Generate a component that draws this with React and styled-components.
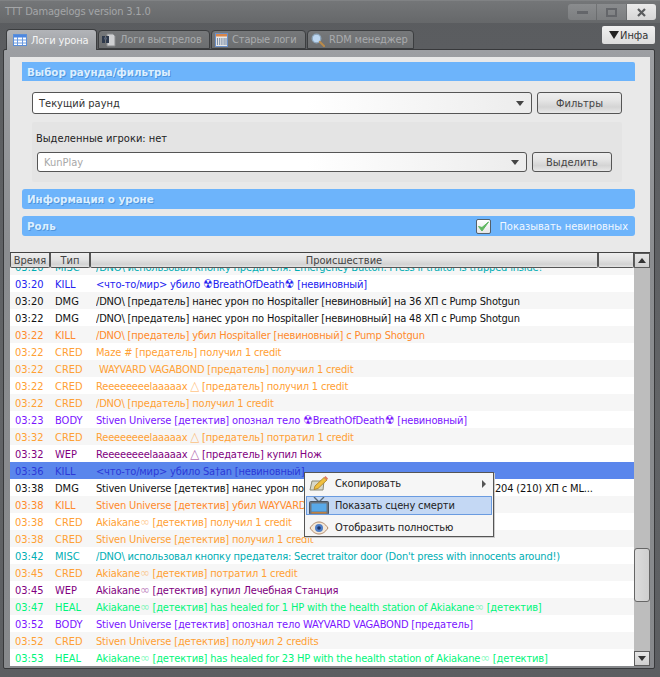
import React from 'react';
import styled, { createGlobalStyle } from 'styled-components';

const Global = createGlobalStyle`
  html, body { margin: 0; padding: 0; background: #5f6164; }
  body { font-family: "DejaVu Sans Condensed", "DejaVu Sans", sans-serif; font-stretch: condensed; font-size: 11px; }
  * { box-sizing: border-box; }
`;

const Window = styled.div`
  position: relative; width: 660px; height: 677px; overflow: hidden;
  display: flex; flex-direction: column;
  background: linear-gradient(#5a5c5f, #626467 60%, #5c5e61);
`;
const TitleBar = styled.div`
  height: 23px; flex: none; display: flex; align-items: flex-start; justify-content: space-between;
  padding: 3px 4px 0 5px;
  background: linear-gradient(#747678, #66686a);
  border-top: 1px solid #808284;
`;
const Title = styled.span`color: #a4a6a8; line-height: 15px; letter-spacing: -.18px;`;
const Controls = styled.div`display: flex; gap: 1px; margin-top: 0;`;
const WinBtn = styled.div`
  width: ${p => p.$w}px; height: 16px; display: flex; align-items: center; justify-content: center;
  background: ${p => p.$light ? 'linear-gradient(#eaeaea,#d6d6d6)' : 'linear-gradient(#8a8c8e,#7c7e80)'};
  border-radius: ${p => p.$r};
`;
const TabStrip = styled.div`
  height: 26px; flex: none; display: flex; align-items: flex-end; justify-content: space-between;
  padding: 0 5px 0 6px; position: relative; z-index: 2;
`;
const Tabs = styled.div`display: flex; align-items: flex-end; gap: 1px;`;
const Tab = styled.div`
  width: ${p => p.$w}px; display: flex; align-items: center; gap: 4px; white-space: nowrap; letter-spacing: -.15px;
  height: ${p => p.$active ? 21 : 19}px; margin-bottom: ${p => p.$active ? -1 : 0}px;
  padding: 0 0 0 ${p => p.$pad}px; border: 1px solid #3c3e40; border-bottom: ${p => p.$active ? 'none' : '1px solid #3c3e40'};
  border-radius: 4px 4px 0 0;
  color: ${p => p.$active ? '#f4f4f4' : '#a9abad'};
  background: ${p => p.$active ? 'linear-gradient(#b2b4b8,#9b9ea2)' : 'linear-gradient(#76787a,#6c6e70)'};
`;
const InfoBtn = styled.div`
  width: 53px; height: 18px; margin-bottom: 5px; display: flex; align-items: center; gap: 1px; padding-left: 7px;
  background: linear-gradient(#f0f0f0,#dcdcdc); border-radius: 2px; color: #333;
`;
const InfoArrow = styled.i`
  width: 0; height: 0; border-left: 5px solid transparent; border-right: 5px solid transparent; border-top: 8px solid #222;
`;
const Panel = styled.div`
  margin: 0 5px 8px 3px; flex: 1; min-height: 0; border: 1px solid #38393b; border-radius: 2px;
  padding: 7px 4px 2px 6px; display: flex; flex-direction: column;
  background: linear-gradient(#9d9fa3, #8b8d90 200px, #87898c);
`;
const Filters = styled.div`
  height: 195px; flex: none; background: #e9e9e9; padding: 5px 15px 0 12px; display: flex; flex-direction: column;
`;
const Bar = styled.div`
  flex: none; height: ${p => p.$h}px; margin-top: ${p => p.$mt || 0}px; background: #6db4fb; border-radius: ${p => p.$flat ? '0 2px 0 0' : '3px'};
  display: flex; align-items: center; justify-content: space-between; padding: 0 7px 0 5px;
`;
const BarTitle = styled.span`
  color: #dcefff; font-family: "DejaVu Sans", sans-serif; font-stretch: normal; font-weight: 700; font-size: 10.3px; text-shadow: 1px 1px 0 #4f95dc;
`;
const Check = styled.label`display: flex; align-items: center; gap: 8px; color: #f2f8ff;`;
const CheckBox = styled.span`
  width: 15px; height: 15px; border: 1px solid #55606a; border-radius: 2px; background: linear-gradient(#fff,#e6e6e6);
  display: flex; align-items: center; justify-content: center;
`;
const Line = styled.div`display: flex; gap: 5px; padding: ${p => p.$pad}; flex: none;`;
const Combo = styled.div`
  flex: 1; height: ${p => p.$h}px; border: 1px solid #555; border-radius: 3px; display: flex; align-items: center; justify-content: space-between;
  padding: 0 7px 0 6px; background: linear-gradient(90deg, #fff 55%, #ececec); color: ${p => p.$muted ? '#a8a8a8' : '#333'};
`;
const ComboArrow = styled.i`
  width: 0; height: 0; border-left: 4px solid transparent; border-right: 4px solid transparent; border-top: 5px solid #444;
`;
const Button = styled.div`
  width: ${p => p.$w}px; height: ${p => p.$h}px; flex: none; border: 1px solid #555; border-radius: 3px; display: flex; align-items: center; justify-content: center;
  color: #444; background: linear-gradient(#eeeeee, #e6e6e6 35%, #d4d4d4 70%, #e8e8e8);
`;
const PlayersBox = styled.div`
  margin: 8px 0 0 10px; width: 590px; height: 60px; flex: none; background: #e4e4e4; border-radius: 2px; padding: 9px 10px 0 4px;
  display: flex; flex-direction: column;
`;
const PlayersLabel = styled.div`color: #222; line-height: 16px; height: 21px;`;
const List = styled.div`
  height: 414px; flex: none; display: flex; flex-direction: column; background: #fff; position: relative;
`;
const Header = styled.div`display: flex; height: 16px; flex: none; border-top: 1px solid #444; position: relative; z-index: 1;`;
const HeadCell = styled.div`
  width: ${p => p.$w}px; border: 1px solid #555; border-top: none; border-radius: 0 0 2px 2px; color: #444;
  display: flex; align-items: center; justify-content: center; line-height: 13px;
  background: linear-gradient(#eeeeee, #e2e2e2 50%, #d2d2d2 80%, #e4e4e4);
`;
const ScrollBtn = styled.div`
  width: 16px; height: 15px; flex: none; background: linear-gradient(#e6e6e6,#cfcfcf); border: 1px solid #5c5c5c; display: flex; align-items: center; justify-content: center;
`;
const ArrowUp = styled.i`
  width: 0; height: 0; border-left: 4px solid transparent; border-right: 4px solid transparent; border-bottom: 5px solid #333;
`;
const ArrowDown = styled.i`
  width: 0; height: 0; border-left: 4px solid transparent; border-right: 4px solid transparent; border-top: 5px solid #333;
`;
const Body = styled.div`flex: 1; min-height: 0; display: flex;`;
const Rows = styled.div`flex: 1; min-width: 0; overflow: hidden;`;
const RowsInner = styled.div`margin-top: -10px;`;
const Row = styled.div`
  height: 17px; display: flex; align-items: center; white-space: nowrap; line-height: 17px; padding-top: 1px;
  color: ${p => p.$c};
  background: ${p => p.$sel ? '#5a86ec' : p.$odd ? '#f6f6f6' : '#ffffff'};
`;
const Time = styled.span`width: 45px; padding-left: 5px; flex: none;`;
const Kind = styled.span`width: 41px; flex: none;`;
const Msg = styled.span`flex: 1; min-width: 0; overflow: hidden; letter-spacing: -.17px;`;
const Rad = styled.span`font-size: 12px; letter-spacing: 0;`;
const Tri = styled.span`font-size: 13px; line-height: 1; opacity: .6;`;
const Inf = styled.span`font-size: 13px; line-height: 1; opacity: .45;`;
const Track = styled.div`
  width: 16px; flex: none; background: #bdbdbd; display: flex; flex-direction: column; padding-top: 280px;
`;
const Thumb = styled.div`
  height: 54px; flex: none; background: linear-gradient(90deg,#dcdcdc,#cfcfcf); border: 1px solid #666; border-radius: 3px;
`;
const TrackFill = styled.div`flex: 1;`;
const Menu = styled.div`
  position: absolute; left: 304px; top: 472px; width: 190px; height: 65px; background: #f6f6f6; border: 1px solid #555;
  box-shadow: 1px 1px 0 #ccc; padding: 1px 1px; z-index: 5; display: flex; flex-direction: column; gap: 3px;
`;
const MenuItem = styled.div`
  height: 19px; flex: none; padding-left: 3px; display: flex; align-items: center; gap: 6px; color: #222; position: relative; letter-spacing: -.15px;
  background: ${p => p.$hot ? '#c4d8f4' : 'transparent'};
  outline: ${p => p.$hot ? '1px solid #6a9be0' : 'none'}; outline-offset: -1px;
`;
const MenuLabel = styled.span`flex: 1;`;
const SubArrow = styled.i`
  margin-right: 6px; width: 0; height: 0; border-top: 4px solid transparent; border-bottom: 4px solid transparent; border-left: 4px solid #555;
`;

const C = { misc: '#00aeb4', kill: '#2222f0', dmg: '#111', ok: '#ff8a2b', cred: '#ffa033', body: '#7a14ff', wep: '#7f007f', heal: '#00f57a', sel: '#2b39d8' };
const R = () => <Rad>☢</Rad>;
const Reee = () => <>Reeeeeeeelaaaaax <Tri>△</Tri></>;
const Aki = () => <>Akiakane<Inf>∞</Inf></>;

const rows = [
  ['03:20', 'MISC', C.misc, <>/DNO\ использовал кнопку предателя: Emergency Button. Press if traitor is trapped inside!</>],
  ['03:20', 'KILL', C.kill, <>{'<что-то/мир>'} убило <R />BreathOfDeath<R /> [невиновный]</>],
  ['03:20', 'DMG', C.dmg, <>/DNO\ [предатель] нанес урон по Hospitaller [невиновный] на 36 ХП с Pump Shotgun</>],
  ['03:22', 'DMG', C.dmg, <>/DNO\ [предатель] нанес урон по Hospitaller [невиновный] на 48 ХП с Pump Shotgun</>],
  ['03:22', 'KILL', C.ok, <>/DNO\ [предатель] убил Hospitaller [невиновный] с Pump Shotgun</>],
  ['03:22', 'CRED', C.cred, <>Maze # [предатель] получил 1 credit</>],
  ['03:22', 'CRED', C.cred, <>&nbsp;WAYVARD VAGABOND [предатель] получил 1 credit</>],
  ['03:22', 'CRED', C.cred, <><Reee /> [предатель] получил 1 credit</>],
  ['03:22', 'CRED', C.cred, <>/DNO\ [предатель] получил 1 credit</>],
  ['03:23', 'BODY', C.body, <>Stiven Universe [детектив] опознал тело <R />BreathOfDeath<R /> [невиновный]</>],
  ['03:32', 'CRED', C.cred, <><Reee /> [предатель] потратил 1 credit</>],
  ['03:32', 'WEP', C.wep, <><Reee /> [предатель] купил Нож</>],
  ['03:36', 'KILL', C.sel, <>{'<что-то/мир>'} убило Sa†an [невиновный]</>, true],
  ['03:38', 'DMG', C.dmg, <>Stiven Universe [детектив] нанес урон по WAYVARD VAGABOND [предатель] на 204 (210) ХП с ML...</>],
  ['03:38', 'KILL', C.ok, <>Stiven Universe [детектив] убил WAYVARD VAGABOND [предатель] с ML</>],
  ['03:38', 'CRED', C.cred, <><Aki /> [детектив] получил 1 credit</>],
  ['03:38', 'CRED', C.cred, <>Stiven Universe [детектив] получил 1 credit</>],
  ['03:42', 'MISC', C.misc, <>/DNO\ использовал кнопку предателя: Secret traitor door (Don't press with innocents around!)</>],
  ['03:45', 'CRED', C.cred, <><Aki /> [детектив] потратил 1 credit</>],
  ['03:45', 'WEP', C.wep, <><Aki /> [детектив] купил Лечебная Станция</>],
  ['03:47', 'HEAL', C.heal, <><Aki /> [детектив] has healed for 1 HP with the health station of <Aki /> [детектив]</>],
  ['03:52', 'BODY', C.body, <>Stiven Universe [детектив] опознал тело WAYVARD VAGABOND [предатель]</>],
  ['03:52', 'CRED', C.cred, <>Stiven Universe [детектив] получил 2 credits</>],
  ['03:53', 'HEAL', C.heal, <><Aki /> [детектив] has healed for 23 HP with the health station of <Aki /> [детектив]</>],
];

const TableIcon = () => (
  <svg width="14" height="12" viewBox="0 0 14 12">
    <rect x=".5" y=".5" width="13" height="11" fill="#fff" stroke="#5b8fd8" />
    <rect x="1" y="1" width="12" height="2.500" fill="#4c86e0" />
    <path d="M1 6h12M1 9h12M4.500 3v8M9.500 3v8" stroke="#6a9ae0" />
  </svg>
);
const BinocIcon = () => (
  <svg width="14" height="14" viewBox="0 0 14 14">
    <path d="M5 1h6l2 2v10H5z" fill="#cfd0d2" stroke="#8a8c8e" />
    <rect x="0" y="3" width="3" height="7" fill="#2f3a4c" />
    <rect x="4" y="3" width="3" height="7" fill="#2f3a4c" />
    <rect x="2" y="4.500" width="3" height="2" fill="#566074" />
  </svg>
);
const ColsIcon = () => (
  <svg width="13" height="14" viewBox="0 0 13 14">
    <rect x=".5" y=".5" width="12" height="13" fill="#e8e8e8" stroke="#6a8fc8" />
    <rect x="1" y="1" width="11" height="2.500" fill="#d8854a" />
    <path d="M2.500 5v7M4.700 5v7M6.900 5v7M9.100 5v7M11 5v7" stroke="#7f90a8" strokeWidth="1.100" />
  </svg>
);
const LensIcon = () => (
  <svg width="14" height="14" viewBox="0 0 14 14">
    <circle cx="5.500" cy="5.500" r="4.300" fill="#bcd6f0" stroke="#8ea6bc" strokeWidth="1.300" />
    <path d="M9 9l4 4" stroke="#b98a4a" strokeWidth="2.100" strokeLinecap="round" />
  </svg>
);
const CheckMark = () => (
  <svg width="13" height="13" viewBox="0 0 13 13">
    <path d="M1.500 6.500l3.500 4.500 6.500-9-6.500 5.500z" fill="#5fb760" stroke="#5fb760" strokeWidth="1" strokeLinejoin="round" />
  </svg>
);
const PencilIcon = () => (
  <svg width="20" height="17" viewBox="0 0 20 17">
    <path d="M3 6h12l-1 9H1z" fill="#d8d8c8" stroke="#8a8a78" />
    <path d="M6 11L15 2.500l3 2.500-9 8.500-4 1z" fill="#f0c040" stroke="#a87c20" strokeWidth=".8" />
    <path d="M15 2.500l3 2.500 1-1.500-2.500-2.500z" fill="#e07860" />
  </svg>
);
const TvIcon = () => (
  <svg width="20" height="19" viewBox="0 0 20 19">
    <path d="M5 1l5 5 5-5" fill="none" stroke="#5a6a78" strokeWidth="1.400" />
    <rect x=".5" y="5.500" width="19" height="13" rx="1" fill="#6a7480" stroke="#4a5460" />
    <rect x="2.500" y="7.500" width="15" height="8" fill="#58a8e8" />
    <rect x="2.500" y="16" width="15" height="1.500" fill="#c08040" />
  </svg>
);
const EyeIcon = () => (
  <svg width="20" height="14" viewBox="0 0 20 14">
    <path d="M1 7c3-4.500 6-6 9-6s6 1.500 9 6c-3 4.500-6 6-9 6S4 11.500 1 7z" fill="#f4e8d8" stroke="#b08868" />
    <circle cx="10" cy="7" r="4" fill="#4f7fc8" />
    <circle cx="10" cy="7" r="1.800" fill="#1c3468" />
  </svg>
);

export default function App() {
  return (
    <Window>
      <Global />
      <TitleBar>
        <Title>TTT Damagelogs version 3.1.0</Title>
        <Controls>
          <WinBtn $w={28} $r="3px 0 0 3px">
            <svg width="11" height="4" viewBox="0 0 11 4"><rect width="11" height="3" y="1" fill="#64666a" /></svg>
          </WinBtn>
          <WinBtn $w={29} $r="0">
            <svg width="11" height="9" viewBox="0 0 11 9"><rect x="1" y="1" width="9" height="7" fill="none" stroke="#64666a" strokeWidth="2" /></svg>
          </WinBtn>
          <WinBtn $w={29} $r="0 3px 3px 0" $light>
            <svg width="9" height="9" viewBox="0 0 9 9"><path d="M1 1l7 7M8 1L1 8" stroke="#5a5c5e" strokeWidth="2.200" /></svg>
          </WinBtn>
        </Controls>
      </TitleBar>
      <TabStrip>
        <Tabs>
          <Tab $active $w={91} $pad={6}><TableIcon />Логи урона</Tab>
          <Tab $w={112} $pad={3}><BinocIcon />Логи выстрелов</Tab>
          <Tab $w={95} $pad={3}><ColsIcon />Старые логи</Tab>
          <Tab $w={107} $pad={3}><LensIcon />RDM менеджер</Tab>
        </Tabs>
        <InfoBtn><InfoArrow />Инфа</InfoBtn>
      </TabStrip>
      <Panel>
        <Filters>
          <Bar $h={19} $flat><BarTitle>Выбор раунда/фильтры</BarTitle></Bar>
          <Line $pad="11px 13px 0 10px">
            <Combo $h={22}>Текущий раунд<ComboArrow /></Combo>
            <Button $w={85} $h={22}>Фильтры</Button>
          </Line>
          <PlayersBox>
            <PlayersLabel>Выделенные игроки: нет</PlayersLabel>
            <Line $pad="0 0 0 1px">
              <Combo $h={20} $muted>KunPlay<ComboArrow /></Combo>
              <Button $w={80} $h={20}>Выделить</Button>
            </Line>
          </PlayersBox>
          <Bar $h={20} $mt={7}><BarTitle>Информация о уроне</BarTitle></Bar>
          <Bar $h={20} $mt={7}>
            <BarTitle>Роль</BarTitle>
            <Check><CheckBox><CheckMark /></CheckBox>Показывать невиновных</Check>
          </Bar>
        </Filters>
        <List>
          <Header>
            <HeadCell $w={40}>Время</HeadCell>
            <HeadCell $w={40}>Тип</HeadCell>
            <HeadCell $w={508}>Происшествие</HeadCell>
            <HeadCell $w={36} />
            <ScrollBtn><ArrowUp /></ScrollBtn>
          </Header>
          <Body>
            <Rows>
              <RowsInner>
                {rows.map(([t, k, c, m, sel], i) => (
                  <Row key={i} $c={c} $sel={sel} $odd={i % 2 === 0}>
                    <Time>{t}</Time>
                    <Kind>{k}</Kind>
                    <Msg>{m}</Msg>
                  </Row>
                ))}
              </RowsInner>
            </Rows>
            <Track>
              <Thumb />
              <TrackFill />
              <ScrollBtn><ArrowDown /></ScrollBtn>
            </Track>
          </Body>
        </List>
      </Panel>
      <Menu>
        <MenuItem><PencilIcon /><MenuLabel>Скопировать</MenuLabel><SubArrow /></MenuItem>
        <MenuItem $hot><TvIcon /><MenuLabel>Показать сцену смерти</MenuLabel></MenuItem>
        <MenuItem><EyeIcon /><MenuLabel>Отобразить полностью</MenuLabel></MenuItem>
      </Menu>
    </Window>
  );
}
